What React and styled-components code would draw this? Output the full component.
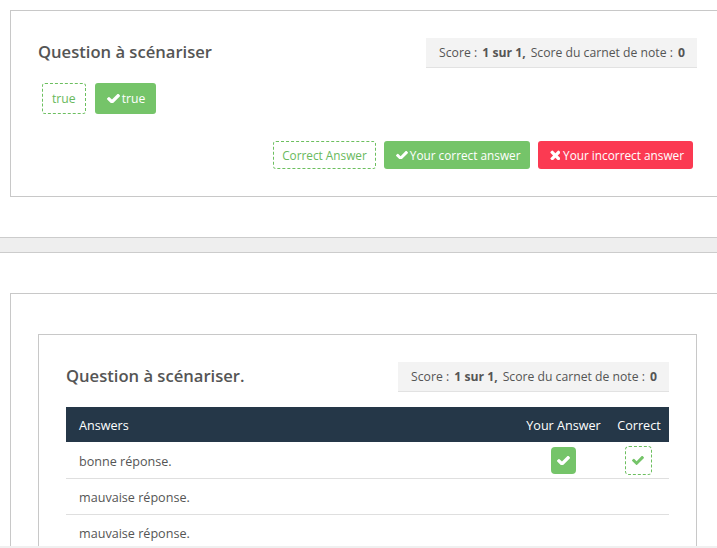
import React from "react";
import styled, { createGlobalStyle } from "styled-components";

const Global = createGlobalStyle`
  html, body { margin: 0; padding: 0; background: #fff; overflow: hidden; }
  body { font-family: "Open Sans", "Noto Sans", sans-serif; font-size: 12px; color: #555; }
  * { box-sizing: border-box; }
`;

const Page = styled.div`
  width: 717px;
  height: 548px;
  display: flex;
  flex-direction: column;
  overflow: hidden;
`;
const Content = styled.div`
  flex: 1;
  min-height: 0;
  overflow: hidden;
`;
const Strip = styled.div`
  height: 2px;
  background: #f0f0f0;
`;
const Section = styled.section`
  padding: ${(p) => p.$top}px 0 0 10px;
  height: ${(p) => p.$h}px;
`;
const Divider = styled.div`
  height: 16px;
  background: #eeeeee;
  border-top: 1px solid #cccccc;
  border-bottom: 1px solid #cccccc;
`;
const Card = styled.div`
  width: 715px;
  border: 1px solid #c8c8c8;
  background: #fff;
  padding: ${(p) => p.$pad};
  height: ${(p) => p.$h || "auto"};
`;
const InnerCard = styled.div`
  width: 659px;
  height: 300px;
  border: 1px solid #c8c8c8;
  padding: 27px 27px 0;
`;
const Header = styled.div`
  display: flex;
  justify-content: space-between;
  align-items: center;
`;
const Title = styled.h2`
  margin: 0;
  padding-bottom: 2px;
  font-size: 16.6px;
  line-height: 28px;
  font-weight: 600;
  color: #555;
`;
const Score = styled.div`
  height: 30px;
  padding: 0 12px 0 13px;
  display: flex;
  align-items: center;
  white-space: pre;
  background: #f3f3f3;
  border-bottom: 1px solid #e2e2e2;
  font-size: 12.2px;
  color: #555;
  b { font-weight: 700; margin: 0 5px 0 2px; }
  b:last-child { margin-right: 0; }
`;
const Chips = styled.div`
  display: flex;
  gap: 9px;
  margin: 15px 0 0 4px;
`;
const Chip = styled.span`
  height: ${(p) => p.$h}px;
  padding: 0 ${(p) => p.$pr}px 0 ${(p) => p.$pl}px;
  display: inline-flex;
  align-items: center;
  gap: ${(p) => (p.$kind === "bad" ? 3 : 2)}px;
  border-radius: 3px;
  font-size: ${(p) => p.$fs}px;
  white-space: nowrap;
  color: ${(p) => (p.$kind === "dashed" ? "#68b95c" : "#fff")};
  background: ${(p) =>
    p.$kind === "dashed" ? "#fff" : p.$kind === "bad" ? "#fb3a52" : "#75c469"};
  border: ${(p) => (p.$kind === "dashed" ? "1px dashed #6cbf5f" : "none")};
`;
const Legend = styled.div`
  display: flex;
  justify-content: flex-end;
  gap: 8px;
  margin: 27px 4px 0 0;
`;
const Table = styled.table`
  width: 603px;
  margin-top: 15px;
  border-collapse: collapse;
  table-layout: fixed;
  font-size: 12.6px;
`;
const Th = styled.th`
  height: 35px;
  padding: 2px ${(p) => (p.$left ? "13px" : "0")} 0;
  background: #253748;
  color: #fff;
  font-weight: 400;
  text-align: ${(p) => (p.$left ? "left" : "center")};
  width: ${(p) => p.$w || "auto"};
`;
const Tr = styled.tr`
  border-bottom: 1px solid #dfdfdf;
  &:first-child td:first-child { padding-top: 4px; }
`;
const Td = styled.td`
  height: 36px;
  padding: 2px ${(p) => (p.$left ? "13px" : "0")} 0;
  color: #555;
  vertical-align: middle;
  text-align: ${(p) => (p.$left ? "left" : "center")};
`;
const Mark = styled.span`
  display: inline-flex;
  align-items: center;
  justify-content: center;
  vertical-align: middle;
  width: ${(p) => (p.$dashed ? 27 : 25)}px;
  height: ${(p) => (p.$dashed ? 29 : 27)}px;
  margin-right: ${(p) => (p.$dashed ? 2 : 0)}px;
  border-radius: 4px;
  color: ${(p) => (p.$dashed ? "#75c469" : "#fff")};
  background: ${(p) => (p.$dashed ? "#fff" : "#75c469")};
  border: ${(p) => (p.$dashed ? "1px dashed #6cbf5f" : "none")};
`;

const CheckIcon = ({ w = 12 }) => (
  <svg width={w} height={w * 0.72} viewBox="121 350 1550 1116" fill="currentColor" aria-hidden="true">
    <path d="M1671 566q0 40-28 68l-724 724-136 136q-28 28-68 28t-68-28l-136-136-362-362q-28-28-28-68t28-68l136-136q28-28 68-28t68 28l294 295 656-657q28-28 68-28t68 28l136 136q28 28 28 68z" />
  </svg>
);
const CrossIcon = () => (
  <svg width="10.5" height="10.5" viewBox="270 310 1220 1244" fill="currentColor" aria-hidden="true">
    <path d="M1490 1322q0 40-28 68l-136 136q-28 28-68 28t-68-28l-294-294-294 294q-28 28-68 28t-68-28l-136-136q-28-28-28-68t28-68l294-294-294-294q-28-28-28-68t28-68l136-136q28-28 68-28t68 28l294 294 294-294q28-28 68-28t68 28l136 136q28 28 28 68t-28 68l-294 294 294 294q28 28 28 68z" />
  </svg>
);

const rows = ["bonne réponse.", "mauvaise réponse.", "mauvaise réponse."];

function ScoreBox() {
  return (
    <Score>
      Score : <b>1 sur 1,</b>Score du carnet de note : <b>0</b>
    </Score>
  );
}

export default function App() {
  return (
    <Page>
      <Global />
      <Content>
        <Section $top={10} $h={237}>
          <Card $pad="27px 27px 0" $h="187px">
            <Header>
              <Title>Question à scénariser</Title>
              <ScoreBox />
            </Header>
            <Chips>
              <Chip $kind="dashed" $h={31} $pl={9} $pr={9} $fs={12.2}>true</Chip>
              <Chip $h={31} $pl={12} $pr={11} $fs={12.2}><CheckIcon w={13} />true</Chip>
            </Chips>
            <Legend>
              <Chip $kind="dashed" $h={28} $pl={8} $pr={8} $fs={11.8}>Correct Answer</Chip>
              <Chip $h={28} $pl={12} $pr={9} $fs={11.8}><CheckIcon />Your correct answer</Chip>
              <Chip $kind="bad" $h={28} $pl={12} $pr={9} $fs={11.8}><CrossIcon />Your incorrect answer</Chip>
            </Legend>
          </Card>
        </Section>
        <Divider />
        <Section $top={40} $h={300}>
          <Card $pad="40px 27px 0">
            <InnerCard>
              <Header>
                <Title>Question à scénariser.</Title>
                <ScoreBox />
              </Header>
              <Table>
                <thead>
                  <tr>
                    <Th $left>Answers</Th>
                    <Th $w="91px">Your Answer</Th>
                    <Th $w="60px">Correct</Th>
                  </tr>
                </thead>
                <tbody>
                  {rows.map((r, i) => (
                    <Tr key={i}>
                      <Td $left>{r}</Td>
                      <Td>{i === 0 && <Mark><CheckIcon w={13} /></Mark>}</Td>
                      <Td>{i === 0 && <Mark $dashed><CheckIcon w={12} /></Mark>}</Td>
                    </Tr>
                  ))}
                </tbody>
              </Table>
            </InnerCard>
          </Card>
        </Section>
      </Content>
      <Strip />
    </Page>
  );
}
